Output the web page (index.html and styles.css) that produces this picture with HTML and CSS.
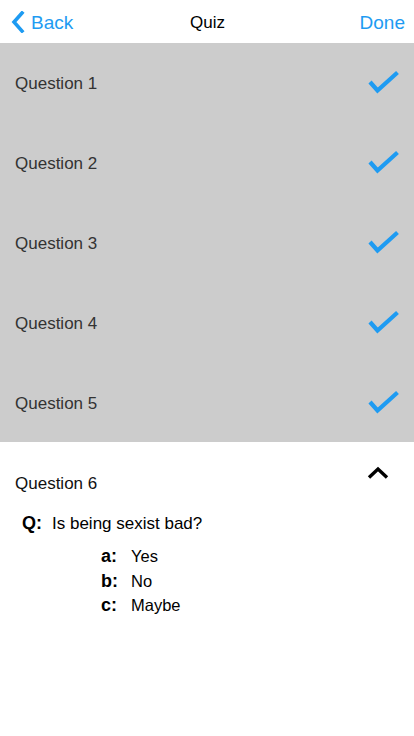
FILE: index.html
```html
<!DOCTYPE html>
<html>
<head>
<meta charset="utf-8">
<link rel="stylesheet" href="styles.css">
</head>
<body>
<header class="nav">
  <a class="nav-back">
    <svg class="back-chev" width="16" height="22" viewBox="0 0 16 22"><path d="M12 2 L4 11 L12 20" fill="none" stroke="#1e9bf2" stroke-width="3.6" stroke-linecap="square"/></svg>
    <span>Back</span>
  </a>
  <div class="nav-title">Quiz</div>
  <a class="nav-done">Done</a>
</header>
<ul class="done-list">
  <li class="done-row"><span>Question 1</span><svg class="check" width="32" height="26" viewBox="0 0 32 26"><path d="M2 12 L9.5 20.5 L29.5 2.5" fill="none" stroke="#1e9bf2" stroke-width="4.2"/></svg></li>
  <li class="done-row"><span>Question 2</span><svg class="check" width="32" height="26" viewBox="0 0 32 26"><path d="M2 12 L9.5 20.5 L29.5 2.5" fill="none" stroke="#1e9bf2" stroke-width="4.2"/></svg></li>
  <li class="done-row"><span>Question 3</span><svg class="check" width="32" height="26" viewBox="0 0 32 26"><path d="M2 12 L9.5 20.5 L29.5 2.5" fill="none" stroke="#1e9bf2" stroke-width="4.2"/></svg></li>
  <li class="done-row"><span>Question 4</span><svg class="check" width="32" height="26" viewBox="0 0 32 26"><path d="M2 12 L9.5 20.5 L29.5 2.5" fill="none" stroke="#1e9bf2" stroke-width="4.2"/></svg></li>
  <li class="done-row"><span>Question 5</span><svg class="check" width="32" height="26" viewBox="0 0 32 26"><path d="M2 12 L9.5 20.5 L29.5 2.5" fill="none" stroke="#1e9bf2" stroke-width="4.2"/></svg></li>
</ul>
<section class="open-q">
  <div class="open-head">
    <span class="open-title">Question 6</span>
    <svg class="up-chev" width="22" height="14" viewBox="0 0 22 14"><path d="M2 11.5 L11 3 L20 11.5" fill="none" stroke="#000" stroke-width="3.4"/></svg>
  </div>
  <div class="q-line"><span class="q-label">Q:</span><span class="q-text">Is being sexist bad?</span></div>
  <ul class="answers">
    <li><span class="a-label">a:</span><span class="a-text">Yes</span></li>
    <li><span class="a-label">b:</span><span class="a-text">No</span></li>
    <li><span class="a-label">c:</span><span class="a-text">Maybe</span></li>
  </ul>
</section>
</body>
</html>
```
FILE: styles.css
```css
* { box-sizing: border-box; }
html, body { margin: 0; padding: 0; background: #fff; }
body { font-family: "Liberation Sans", Arial, sans-serif; width: 414px; height: 736px; overflow: hidden; }

.nav {
  height: 43px;
  display: grid;
  grid-template-columns: 1fr auto 1fr;
  align-items: center;
  padding: 0 9px 0 10px;
  background: #fff;
}
.nav-back {
  display: flex;
  align-items: center;
  gap: 5px;
  color: #1e9bf2;
  font-size: 19px;
  justify-self: start;
}
.back-chev { display: block; }
.nav-back span { position: relative; top: 1px; }
.nav-title { font-size: 17px; color: #000; position: relative; top: 1px; }
.nav-done { justify-self: end; color: #1e9bf2; font-size: 19px; position: relative; top: 1px; }

.done-list { list-style: none; margin: 0; padding: 0; background: #cccccc; }
.done-row {
  height: 80px;
  display: flex;
  align-items: center;
  justify-content: space-between;
  padding: 0 15px 0 15px;
  font-size: 17px;
  color: #333;
}
.done-row:last-child { height: 79px; }
.done-row span { position: relative; top: 1px; }
.check { display: block; position: relative; left: 1px; }

.open-q { padding: 24px 0 0 0; }
.open-head {
  display: flex;
  justify-content: space-between;
  align-items: flex-start;
  padding: 0 25px 0 15px;
  height: 32px;
}
.open-title { font-size: 17px; color: #111; margin-top: 8px; }
.up-chev { display: block; }

.q-line { display: flex; align-items: baseline; padding-left: 22px; margin-top: 15px; }
.q-label { font-weight: bold; font-size: 18px; width: 30px; color: #000; }
.q-text { font-size: 17px; color: #000; }

.answers { list-style: none; margin: 12px 0 0 0; padding: 0 0 0 101px; }
.answers li { display: flex; align-items: baseline; height: 24.5px; }
.a-label { font-weight: bold; font-size: 18px; width: 30px; color: #000; }
.a-text { font-size: 16.5px; color: #000; }
```
